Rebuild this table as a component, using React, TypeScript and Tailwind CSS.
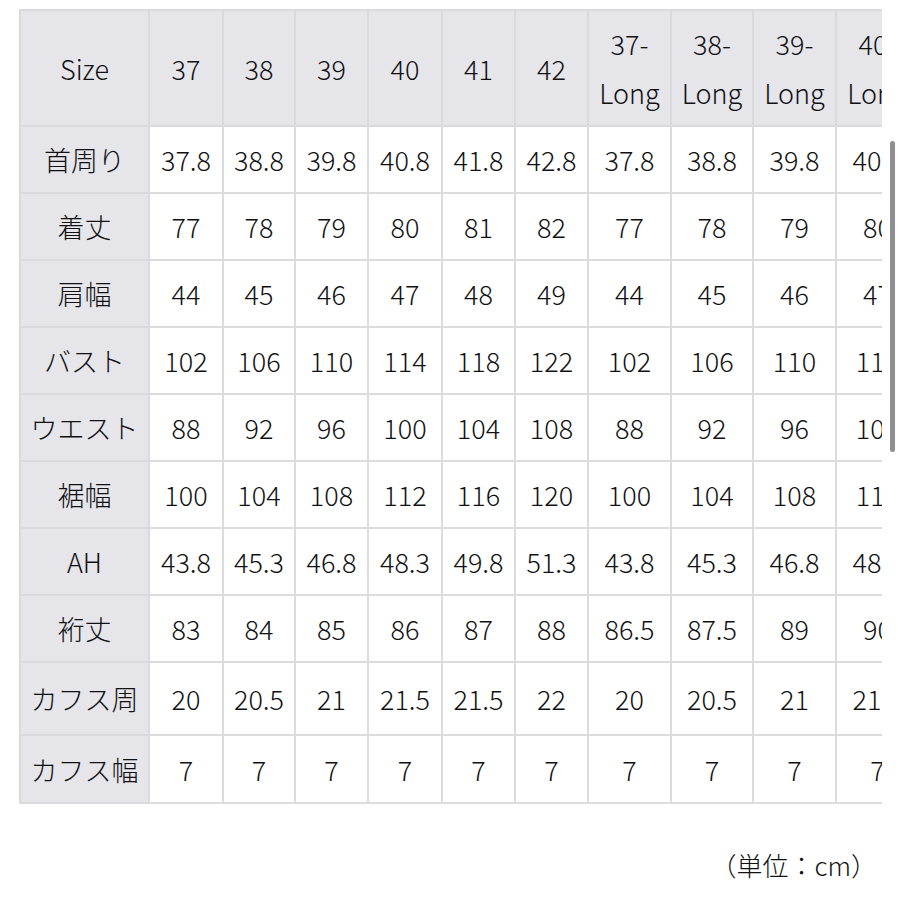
const headers: string[][] = [
  ["37"],
  ["38"],
  ["39"],
  ["40"],
  ["41"],
  ["42"],
  ["37-", "Long"],
  ["38-", "Long"],
  ["39-", "Long"],
  ["40-", "Long"],
];

const colWidths = [129, 74, 72, 73, 74, 73, 73, 83, 82, 83, 83];

const rows: { label: string; values: string[]; h: string }[] = [
  { label: "首周り", values: ["37.8", "38.8", "39.8", "40.8", "41.8", "42.8", "37.8", "38.8", "39.8", "40.8"], h: "h-[67px]" },
  { label: "着丈", values: ["77", "78", "79", "80", "81", "82", "77", "78", "79", "80"], h: "h-[67px]" },
  { label: "肩幅", values: ["44", "45", "46", "47", "48", "49", "44", "45", "46", "47"], h: "h-[67px]" },
  { label: "バスト", values: ["102", "106", "110", "114", "118", "122", "102", "106", "110", "114"], h: "h-[67px]" },
  { label: "ウエスト", values: ["88", "92", "96", "100", "104", "108", "88", "92", "96", "100"], h: "h-[67px]" },
  { label: "裾幅", values: ["100", "104", "108", "112", "116", "120", "100", "104", "108", "112"], h: "h-[67px]" },
  { label: "AH", values: ["43.8", "45.3", "46.8", "48.3", "49.8", "51.3", "43.8", "45.3", "46.8", "48.3"], h: "h-[67px]" },
  { label: "裄丈", values: ["83", "84", "85", "86", "87", "88", "86.5", "87.5", "89", "90"], h: "h-[67px]" },
  { label: "カフス周", values: ["20", "20.5", "21", "21.5", "21.5", "22", "20", "20.5", "21", "21.5"], h: "h-[73px]" },
  { label: "カフス幅", values: ["7", "7", "7", "7", "7", "7", "7", "7", "7", "7"], h: "h-[68px]" },
];

export default function App() {
  return (
    <div
      className="relative w-[900px] h-[900px] bg-white text-[#111113] font-light"
      style={{ fontFamily: '"Noto Sans CJK JP", "Noto Sans", sans-serif' }}
    >
      <div className="pt-[9px] pl-[19px]">
        <div className="w-[863px] overflow-hidden">
          <table className="table-fixed border-collapse w-[899px] text-[27px] leading-none">
            <colgroup>
              {colWidths.map((w, i) => (
                <col key={i} style={{ width: w }} />
              ))}
            </colgroup>
            <thead>
              <tr className="h-[116px] bg-[#e5e5ea]">
                <th className="border-2 border-[#d9d9de] font-light text-center">Size</th>
                {headers.map((h, i) => (
                  <th key={i} className="border-2 border-[#d9d9de] font-light text-center p-0">
                    {h.length === 1 ? (
                      h[0]
                    ) : (
                      <div className="flex flex-col items-center gap-[22px] whitespace-nowrap">
                        <span>{h[0]}</span>
                        <span>{h[1]}</span>
                      </div>
                    )}
                  </th>
                ))}
              </tr>
            </thead>
            <tbody>
              {rows.map((r) => (
                <tr key={r.label} className={r.h}>
                  <td className="border-2 border-[#d9d9de] bg-[#e5e5ea] text-center whitespace-nowrap p-0">
                    {r.label}
                  </td>
                  {r.values.map((v, i) => (
                    <td key={i} className="border-2 border-[#dcdcdc] bg-white text-center whitespace-nowrap p-0">
                      {v}
                    </td>
                  ))}
                </tr>
              ))}
            </tbody>
          </table>
        </div>
        <p className="mt-[46px] pr-[23px] text-right text-[26px] leading-[30px]">（単位：cm）</p>
      </div>
      <div className="absolute left-[890px] top-[141px] w-[5px] h-[311px] rounded-full bg-[#8e8e93]" />
    </div>
  );
}
